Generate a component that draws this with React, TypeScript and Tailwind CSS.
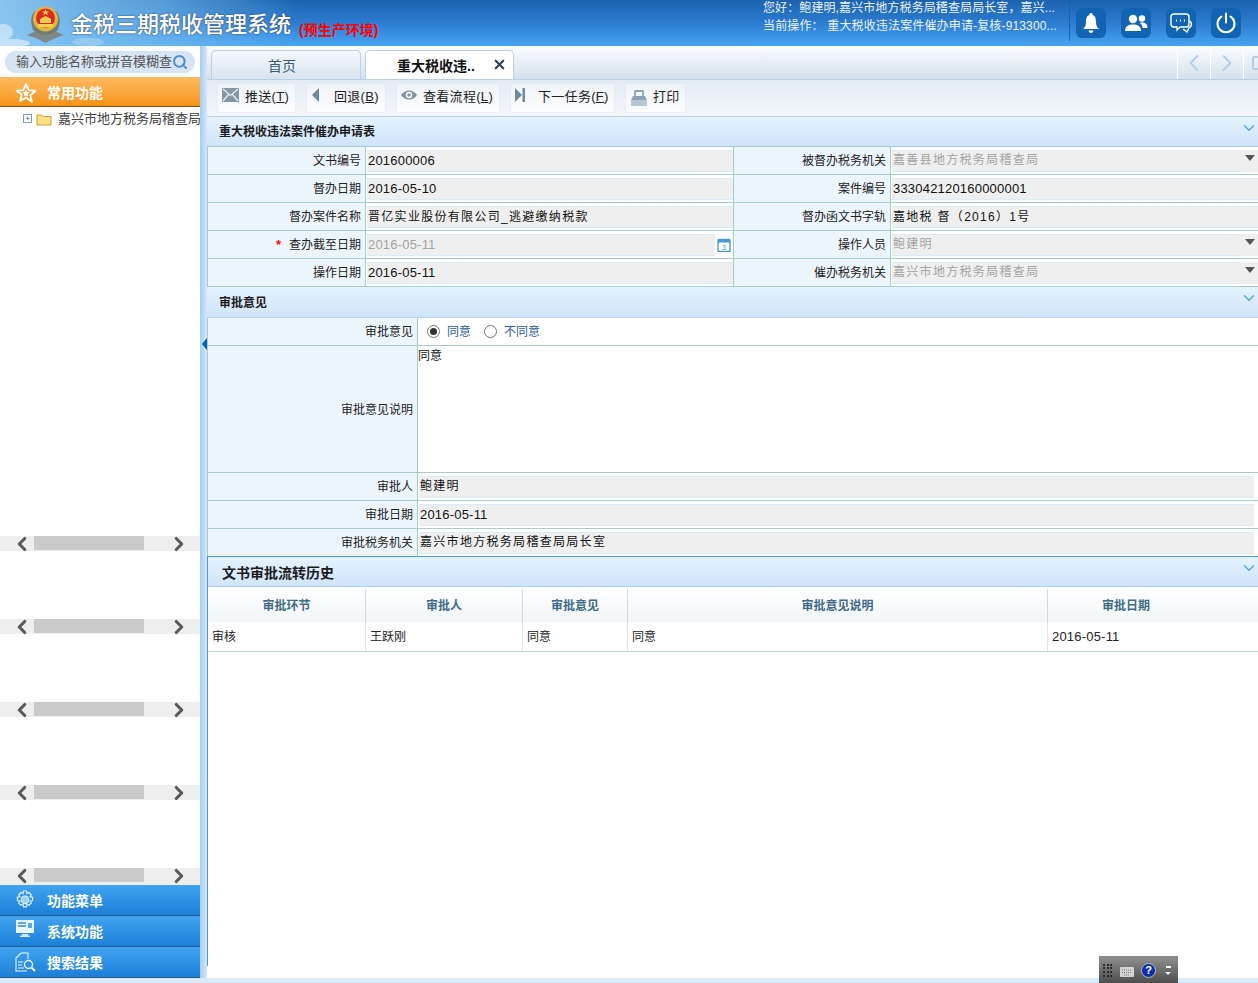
import React from 'react';
import { ChevronDown, ChevronLeft, ChevronRight, Search, X } from 'lucide-react';

const font = 'font-["Liberation_Sans","Noto_Sans_CJK_SC",sans-serif]';

// 表单的一行
interface Field {
  label: string;
  value: string;
  kind?: 'input' | 'select' | 'date';
  required?: boolean;
  disabled?: boolean;
  wide?: boolean;
}

const formRows: [Field, Field][] = [
  [
    { label: '文书编号', value: '201600006' },
    { label: '被督办税务机关', value: '嘉善县地方税务局稽查局', kind: 'select', disabled: true, wide: true },
  ],
  [
    { label: '督办日期', value: '2016-05-10' },
    { label: '案件编号', value: '333042120160000001' },
  ],
  [
    { label: '督办案件名称', value: '晋亿实业股份有限公司_逃避缴纳税款', wide: true },
    { label: '督办函文书字轨', value: '嘉地税 督（2016）1号', wide: true },
  ],
  [
    { label: '查办截至日期', value: '2016-05-11', kind: 'date', required: true, disabled: true },
    { label: '操作人员', value: '鲍建明', kind: 'select', disabled: true, wide: true },
  ],
  [
    { label: '操作日期', value: '2016-05-11' },
    { label: '催办税务机关', value: '嘉兴市地方税务局稽查局', kind: 'select', disabled: true, wide: true },
  ],
];

const FieldValue: React.FC<{ field: Field }> = ({ field }) => {
  const tone = field.disabled ? 'text-[#a3a3a3]' : 'text-[#111]';
  const spacing = field.wide ? 'text-xs tracking-[1.3px]' : 'text-[13px] tracking-[0.2px]';
  const lift = field.kind === 'select' ? 'pb-[2px]' : '';
  return (
    <div className="flex h-full items-center pl-px">
      <div className={`flex h-[22px] min-w-0 flex-1 items-center border-y border-[#dcebf5] bg-[#efefef] pl-[1px] ${tone} ${spacing} ${lift}`}>
        {field.value}
      </div>
      {field.kind === 'date' && (
        <svg className="mx-[2px] h-[14px] w-[14px] shrink-0" viewBox="0 0 14 14">
          <rect x="1" y="1.5" width="12" height="12" rx="1" fill="#fff" stroke="#4a9ad8" strokeWidth="1.4" />
          <rect x="1" y="1.5" width="12" height="3" fill="#4a9ad8" />
          <text x="7" y="12" fontSize="7" textAnchor="middle" fill="#4a9ad8">3</text>
        </svg>
      )}
      {field.kind === 'select' && (
        <div className="flex h-[22px] w-[17px] shrink-0 items-center justify-center bg-[#efefef]">
          <div className="h-0 w-0 -translate-y-[3px] border-x-[5px] border-t-[6px] border-x-transparent border-t-[#555]" />
        </div>
      )}
    </div>
  );
};

const Label: React.FC<{ children: React.ReactNode; required?: boolean; className?: string }> = ({ children, required, className = '' }) => (
  <div className={`flex h-full items-center justify-end bg-[#edf5fc] pr-[4px] text-xs text-[#222] ${className}`}>
    {required && <span className="mr-[8px] text-[13px] font-bold text-[#f00]">*</span>}
    {children}
  </div>
);

const SectionHeader: React.FC<{ title: string; className?: string }> = ({ title, className = '' }) => (
  <div className={`relative flex items-center bg-gradient-to-b from-[#e6f2fe] to-[#cfe4fb] ${className}`}>
    <span className="font-bold text-[#1c1c1c]">{title}</span>
    <ChevronDown className="absolute right-0 top-[2px] h-[18px] w-[18px] text-[#4f9fe0]" strokeWidth={1.7} />
  </div>
);

const HScroll: React.FC<{ className?: string }> = ({ className = 'h-[15px]' }) => (
  <div className={`flex shrink-0 items-start bg-[#eeeeee] ${className}`}>
    <div className="flex h-[15px] w-[34px] items-center justify-end pr-[1.5px]">
      <ChevronLeft className="h-[22px] w-[22px] shrink-0 text-[#5a5a5a]" strokeWidth={3.4} />
    </div>
    <div className="h-[14px] w-[110px] bg-[#cacaca]" />
    <div className="ml-[23.5px] flex h-[15px] items-center">
      <ChevronRight className="h-[22px] w-[22px] shrink-0 text-[#5a5a5a]" strokeWidth={3.4} />
    </div>
  </div>
);

const SideMenu: React.FC<{ title: string; icon: React.ReactNode }> = ({ title, icon }) => (
  <div className="flex h-[31px] items-center border-b border-[#24588f] bg-gradient-to-b from-[#41a3f0] to-[#1c80d8] pl-[15px] text-sm font-bold text-white">
    <span className="flex w-[32px]">{icon}</span>
    <span className="pt-px">{title}</span>
  </div>
);

const ToolButton: React.FC<{ icon: React.ReactNode; label: string; hotkey?: string; gap: string; width: string }> = ({ icon, label, hotkey, gap, width }) => (
  <div className={`flex h-[28px] items-center rounded-[2px] bg-gradient-to-b from-[#f0f4f9] to-[#fbfcfe] pb-[2px] pl-[4px] text-[13px] text-[#222] shadow-[0_0_2px_#dfe5ec] ${width}`}>
    <span className={`mb-[4px] flex shrink-0 ${gap}`}>{icon}</span>
    <span className="tracking-[0.3px]">
      {label}
      {hotkey && (
        <>
          (<span className="underline">{hotkey}</span>)
        </>
      )}
    </span>
  </div>
);

const HeaderIcon: React.FC<{ children: React.ReactNode }> = ({ children }) => (
  <div className="flex h-[30px] w-[30px] items-center justify-center rounded-[6px] bg-[#1264b2]">{children}</div>
);

const historyCols = 'grid-cols-[158px_157px_105px_420px_1fr]';

export default function App() {
  return (
    <div className={`flex h-[983px] w-[1258px] flex-col overflow-hidden bg-white ${font}`}>
      {/* 顶部 */}
      <header className="relative flex h-[46px] shrink-0 items-start overflow-hidden bg-gradient-to-b from-[#1c62ae] via-[#2c7cd0] to-[#47a5f4]">
        <svg className="absolute left-0 top-0 h-[46px] w-[300px]" viewBox="0 0 300 46" aria-hidden="true">
          <defs>
            <linearGradient id="sky" x1="0" x2="1" y1="0" y2="0">
              <stop offset="0" stopColor="#8fc9f2" stopOpacity="0.95" />
              <stop offset="0.55" stopColor="#7cc0f0" stopOpacity="0.6" />
              <stop offset="1" stopColor="#7cc0f0" stopOpacity="0" />
            </linearGradient>
          </defs>
          <rect width="300" height="46" fill="url(#sky)" />
          <ellipse cx="3" cy="32" rx="10" ry="8" fill="#fff" opacity="0.45" />
          <ellipse cx="12" cy="43" rx="18" ry="4" fill="#fff" opacity="0.5" />
          <ellipse cx="88" cy="42" rx="16" ry="4" fill="#fff" opacity="0.22" />
        </svg>
        <svg className="relative ml-[27px] mt-[3px] h-[40px] w-[37px] shrink-0" viewBox="0 0 37 40">
          <path d="M0 32 L9 28 Q18.500 35 28 28 L37 32 L26 36 L18.500 40 L11 36 Z" fill="#7f898c" />
          <path d="M6 27 Q2 15 7 9 L11 7 Q18.500 3 26 7 L30 9 Q35 15 31 27 Q18.500 37 6 27 Z" fill="#6f7d72" />
          <circle cx="18.500" cy="16" r="12.500" fill="#e0b63f" />
          <circle cx="18.500" cy="15" r="9.500" fill="#d92a24" />
          <path d="M11 21 h15 v3 h-15 Z" fill="#f2d04f" />
          <path d="M13 20 v-4 l5.500-3 5.500 3 v4 Z" fill="#f2d04f" />
          <path d="M18.500 6 l1 2.400 h2.500 l-2 1.500 .8 2.400 -2.300-1.500 -2.300 1.500 .8-2.400 -2-1.500 h2.500 Z" fill="#f7d84f" />
        </svg>
        <div className="relative ml-[7px] mt-[10px] text-[22px] font-medium leading-[30px] text-white [text-shadow:0_0_2px_#335]">金税三期税收管理系统</div>
        <div className="relative ml-[8px] mt-[20px] text-sm font-bold leading-[20px] text-[#f00]">(预生产环境)</div>
        <div className="relative ml-auto -mt-px w-[306px] text-xs leading-[18px] text-[#eaf3fc]">
          <div className="tracking-[0.1px]">您好：鲍建明,嘉兴市地方税务局稽查局局长室，嘉兴...</div>
          <div className="tracking-[0.15px]">当前操作： 重大税收违法案件催办申请-复核-913300...</div>
        </div>
        <div className="relative flex h-[41px] gap-[15px] border-l border-[#1264b2] pl-[6px] pt-[8px] pr-[17px]">
          <HeaderIcon>
            <svg className="h-[22px] w-[18px]" viewBox="0 0 18 22" fill="#fff">
              <path d="M9 1 a1.600 1.600 0 0 1 1.600 2 C13.500 4 14 7 14 10 c0 3.500 1 5.500 3 7 H1 c2-1.500 3-3.500 3-7 C4 7 4.500 4 7.400 3 A1.600 1.600 0 0 1 9 1 Z" />
              <path d="M6.500 18.500 h5 a2.500 2.500 0 0 1-5 0 Z" />
            </svg>
          </HeaderIcon>
          <HeaderIcon>
            <svg className="h-[18px] w-[24px]" viewBox="0 0 24 18" fill="#fff">
              <circle cx="9" cy="5" r="4.200" />
              <path d="M1 17 c0-5 3.500-6.500 8-6.500 s8 1.500 8 6.500 Z" />
              <circle cx="18" cy="4.500" r="3.200" />
              <path d="M17 8.500 c3.500-.5 6.500 1 6.500 5.500 H18.500 c0-2.500-1-4-3-5 Z" />
            </svg>
          </HeaderIcon>
          <HeaderIcon>
            <svg className="h-[24px] w-[24px]" viewBox="0 0 24 24" fill="none" stroke="#fff" strokeWidth="1.400">
              <path d="M5 3 h12 a3 3 0 0 1 3 3 v7 a3 3 0 0 1-3 3 h-6 l-3 3 v-3 H5 a3 3 0 0 1-3-3 V6 a3 3 0 0 1 3-3 Z" />
              <path d="M21 10 c2 2 2 6-1 7 l-2 4 -4-3" />
              <path d="M7 9.500 h1 M11 9.500 h1 M15 9.500 h1" strokeWidth="1.800" />
            </svg>
          </HeaderIcon>
          <HeaderIcon>
            <svg className="h-[22px] w-[22px]" viewBox="0 0 22 22" fill="none" stroke="#fff" strokeWidth="2" strokeLinecap="round">
              <path d="M6.500 4.500 a8.500 8.500 0 1 0 9 0" />
              <path d="M11 1.500 v9" />
            </svg>
          </HeaderIcon>
        </div>
      </header>

      <div className="flex min-h-0 flex-1">
        {/* 左侧导航 */}
        <aside className="flex w-[200px] shrink-0 flex-col">
          <div className="flex h-[31px] shrink-0 items-center px-[5px]">
            <div className="flex h-[22px] w-full items-center rounded-full bg-[#d7e4f3] pl-[11px] pr-[7px]">
              <span className="min-w-0 flex-1 whitespace-nowrap text-[13px] text-[#555]">输入功能名称或拼音模糊查</span>
              <Search className="h-[16px] w-[16px] shrink-0 text-[#4a90d0]" strokeWidth={3} />
            </div>
          </div>
          <div className="flex h-[30px] shrink-0 items-center border-b border-[#7a5a20] bg-gradient-to-b from-[#fdbb5e] to-[#f5930f] pl-[15px] pt-[2px] text-sm font-bold text-white">
            <svg className="mr-[10px] h-[22px] w-[22px]" viewBox="0 0 24 24" fill="none" stroke="#fff" strokeWidth="2" strokeLinejoin="round">
              <path d="M12 2 l3 6.800 7.300.7-5.500 4.900 1.600 7.200L12 17l-6.400 3.600 1.600-7.200L1.700 9.500 9 8.800Z" />
              <path d="M12 8.500 l1.200 2.500 2.700.3-2 1.800.6 2.700-2.500-1.400-2.500 1.400.6-2.700-2-1.800 2.700-.3Z" fill="#fff" stroke="none" />
            </svg>
            常用功能
          </div>
          <div className="flex h-[429px] shrink-0 items-start overflow-hidden pl-[23px] pt-[3px]">
            <div className="mt-[4px] flex h-[9px] w-[9px] shrink-0 items-center justify-center border border-[#8a9ab0] text-[8px] leading-none text-[#345]">+</div>
            <svg className="ml-[4px] mt-[2px] h-[14px] w-[16px] shrink-0" viewBox="0 0 16 14">
              <path d="M1 3 h5 l1.500 1.500 H15 V13 H1 Z" fill="#fde082" stroke="#c9a23c" />
            </svg>
            <span className="ml-[6px] whitespace-nowrap text-[13px] leading-[18px] text-[#444]">嘉兴市地方税务局稽查局</span>
          </div>
          <HScroll />
          <div className="h-[68px] shrink-0" />
          <HScroll />
          <div className="h-[68px] shrink-0" />
          <HScroll />
          <div className="h-[68px] shrink-0" />
          <HScroll />
          <div className="h-[68px] shrink-0" />
          <HScroll className="h-[17px]" />
          <div className="flex flex-col">
            <SideMenu
              title="功能菜单"
              icon={
                <svg className="h-[20px] w-[20px]" viewBox="0 0 20 20" fill="none" stroke="#dff0ff" strokeWidth="1.200">
                  <path d="M8.500 1 h3 l.5 2.500 2-1 2.300 2.200-1.200 2 2.500.6 v3.200 l-2.500.6 1.200 2-2.300 2.200-2-1-.5 2.500 h-3 l-.5-2.500-2 1-2.300-2.200 1.200-2-2.500-.6 V7.300 l2.500-.6-1.200-2 2.300-2.200 2 1Z" />
                  <circle cx="10" cy="9.800" r="3.800" fill="#9fd0f5" />
                </svg>
              }
            />
            <SideMenu
              title="系统功能"
              icon={
                <svg className="mb-[5px] h-[19px] w-[20px]" viewBox="0 0 20 19">
                  <rect x="1" y="1" width="18" height="13" fill="#e9f5ff" />
                  <rect x="3" y="3" width="8" height="2" fill="#5fa8e4" />
                  <rect x="3" y="6" width="8" height="2" fill="#5fa8e4" />
                  <rect x="13" y="4" width="4" height="5" fill="#5fa8e4" />
                  <path d="M7 15 h6 v1.500 h2 V18 H5 v-1.500 h2 Z" fill="#cfe7fb" />
                </svg>
              }
            />
            <SideMenu
              title="搜索结果"
              icon={
                <svg className="h-[20px] w-[21px]" viewBox="0 0 21 20" fill="none" stroke="#e9f5ff" strokeWidth="1.100">
                  <path d="M6 1 h7 v6 M6 1 L1 6 v13 h11" />
                  <path d="M3 10 h5 M3 13 h4 M3 16 h6" />
                  <circle cx="13.500" cy="12.500" r="4" strokeWidth="1.400" />
                  <path d="M16.500 15.500 L20 19" strokeWidth="2" />
                </svg>
              }
            />
          </div>
        </aside>

        {/* 折叠条 */}
        <div className="relative w-[7px] shrink-0 bg-gradient-to-r from-[#a6cdf0] to-[#d5e6f7]">
          <div className="absolute left-[2px] top-[292px] h-0 w-0 border-y-[6px] border-r-[5px] border-y-transparent border-r-[#0f5ca8]" />
        </div>

        {/* 主区域 */}
        <main className="relative flex min-w-0 flex-1 flex-col">
          {/* 页签 */}
          <div className="flex h-[34px] shrink-0 items-end border-b border-[#b9cfe6] bg-gradient-to-b from-[#fafdff] to-[#d4e0ec] pl-[4px]">
            <div className="flex h-[29px] w-[150px] items-center justify-center rounded-t-[5px] border border-b-0 border-[#bcd0e4] bg-gradient-to-b from-[#f4f8fc] to-[#d8e4f0] pr-[8px] pt-[2px] text-sm text-[#3c5a78]">首页</div>
            <div className="relative ml-[4px] flex h-[29px] w-[149px] items-center rounded-t-[5px] border border-b-0 border-[#bcd0e4] bg-white pl-[31px] pt-[2px] text-sm font-bold text-[#111]">
              重大税收违..
              <X className="absolute right-[6px] top-[6px] h-[15px] w-[15px] text-[#34405a]" strokeWidth={3.5} />
            </div>
            <div className="ml-auto flex h-full">
              <div className="flex w-[33px] items-center justify-center border-l border-white">
                <ChevronLeft className="h-[28px] w-[28px] text-[#b3cde8]" strokeWidth={1.6} />
              </div>
              <div className="flex w-[33px] items-center justify-center border-l border-white">
                <ChevronRight className="h-[28px] w-[28px] text-[#b3cde8]" strokeWidth={1.6} />
              </div>
              <div className="flex w-[15px] items-center overflow-hidden border-l border-white pl-[8px]">
                <div className="h-[14px] w-[14px] shrink-0 rounded-[2px] border-2 border-[#b3cde8]" />
              </div>
            </div>
          </div>

          {/* 工具栏 */}
          <div className="flex h-[37px] shrink-0 items-start gap-[12px] border-b border-[#b5d3ec] bg-gradient-to-b from-[#e3ebf4] to-[#f3f7fb] pl-[11px] pt-[4px]">
            <ToolButton
              width="w-[77px]"
              gap="mr-[6px]"
              label="推送"
              hotkey="T"
              icon={
                <svg className="h-[14px] w-[17px]" viewBox="0 0 17 14">
                  <rect width="17" height="14" fill="#8397a8" />
                  <path d="M1 1 L8.500 7.500 16 1 M1 13 L6.500 6.500 M16 13 L10.500 6.500" stroke="#e6edf3" strokeWidth="1.300" fill="none" />
                </svg>
              }
            />
            <ToolButton
              width="w-[78px]"
              gap="mr-[13px]"
              label="回退"
              hotkey="B"
              icon={
                <svg className="h-[14px] w-[10px]" viewBox="0 0 10 14">
                  <path d="M8 0 V14 L1 7 Z" fill="#6f8aa0" />
                </svg>
              }
            />
            <ToolButton
              width="w-[102px]"
              gap="mr-[6px]"
              label="查看流程"
              hotkey="L"
              icon={
                <svg className="h-[12px] w-[16px]" viewBox="0 0 16 12">
                  <path d="M0 6 C4 0 12 0 16 6 C12 12 4 12 0 6 Z" fill="#7e96a8" />
                  <circle cx="8" cy="6" r="3.200" fill="#fff" />
                  <circle cx="8" cy="6" r="1.800" fill="#7e96a8" />
                </svg>
              }
            />
            <ToolButton
              width="w-[103px]"
              gap="mr-[12px]"
              label="下一任务"
              hotkey="F"
              icon={
                <svg className="h-[14px] w-[11px]" viewBox="0 0 11 14">
                  <path d="M0 0 L7 7 0 14 Z" fill="#6f8aa0" />
                  <rect x="7.500" width="2.500" height="14" fill="#6f8aa0" />
                </svg>
              }
            />
            <ToolButton
              width="w-[59px]"
              gap="mr-[5px]"
              label="打印"
              icon={
                <svg className="mt-[6px] h-[18px] w-[18px]" viewBox="0 0 18 18">
                  <path d="M5 7 V2 h8 V7" fill="none" stroke="#6f8aa0" strokeWidth="1.300" />
                  <path d="M3 7 H15 L17 11 H1 Z" fill="#8aa2b5" />
                  <rect x="1" y="11" width="16" height="6" fill="#b5c7d4" />
                </svg>
              }
            />
          </div>

          {/* 申请表 */}
          <SectionHeader title="重大税收违法案件催办申请表" className="h-[29px] shrink-0 pl-[12px] text-xs" />
          <div className="shrink-0 border-y border-l border-[#a5cdc9]">
            {formRows.map(([a, b]) => (
              <div key={a.label} className="grid h-[28px] grid-cols-[158px_368px_157px_1fr] border-b border-[#a5cdc9] last:h-[27px] last:border-b-0">
                <div className="border-r border-[#a5cdc9]">
                  <Label required={a.required}>{a.label}</Label>
                </div>
                <div className="border-r border-[#a5cdc9]">
                  <FieldValue field={a} />
                </div>
                <div className="border-r border-[#a5cdc9]">
                  <Label>{b.label}</Label>
                </div>
                <FieldValue field={b} />
              </div>
            ))}
          </div>

          {/* 审批意见 */}
          <SectionHeader title="审批意见" className="h-[31px] shrink-0 border-b border-[#b5d3ec] pt-px pl-[12px] text-xs" />
          <div className="shrink-0 border-l border-[#a5cdc9]">
            <div className="grid h-[28px] grid-cols-[210px_1fr] border-b border-[#a5cdc9]">
              <div className="border-r border-[#a5cdc9]"><Label>审批意见</Label></div>
              <div className="flex items-center pl-[9px] text-xs text-[#2c5d9c]">
                <span className="flex h-[13px] w-[13px] items-center justify-center rounded-full border border-[#777]">
                  <span className="h-[7px] w-[7px] rounded-full bg-[#333]" />
                </span>
                <span className="ml-[7px]">同意</span>
                <span className="ml-[13px] h-[13px] w-[13px] rounded-full border border-[#777]" />
                <span className="ml-[7px]">不同意</span>
              </div>
            </div>
            <div className="grid h-[127px] grid-cols-[210px_1fr] border-b border-[#a5cdc9]">
              <div className="border-r border-[#a5cdc9]"><Label className="pt-[2px]">审批意见说明</Label></div>
              <div className="pt-px text-xs leading-[18px] text-[#111]">同意</div>
            </div>
            {[
              ['审批人', '鲍建明', 'pb-[2px] text-xs tracking-[1.3px]'],
              ['审批日期', '2016-05-11', 'text-[13px] tracking-[0.2px]'],
              ['审批税务机关', '嘉兴市地方税务局稽查局局长室', 'pb-[2px] text-xs tracking-[1.3px]'],
            ].map(([label, value, extra]) => (
              <div key={label} className="grid h-[28px] grid-cols-[210px_1fr] border-b border-[#a5cdc9] last:h-[27px] last:border-b-0">
                <div className="border-r border-[#a5cdc9]"><Label>{label}</Label></div>
                <div className="flex h-full items-center pl-px pr-[4px]">
                  <div className={`flex h-[22px] w-full items-center border-y border-[#dcebf5] bg-[#efefef] pl-[1px] text-[#111] ${extra}`}>{value}</div>
                </div>
              </div>
            ))}
          </div>

          {/* 流转历史 */}
          <div className="flex h-[410px] shrink-0 flex-col border-l border-t border-[#4a9ad8]">
            <SectionHeader title="文书审批流转历史" className="h-[30px] shrink-0 border-b border-[#a9cff0] pl-[14px] pt-[2px] text-sm" />
            <div className={`grid h-[35px] shrink-0 ${historyCols} bg-gradient-to-b from-white to-[#f1f5f9] pt-[2px] text-xs font-bold text-[#3f6a88]`}>
              {['审批环节', '审批人', '审批意见', '审批意见说明', '审批日期'].map((h, i) => (
                <div key={h} className={`flex items-center justify-center ${i < 4 ? 'border-r border-[#cbdcdc]' : 'pr-[54px]'}`}>{h}</div>
              ))}
            </div>
            <div className={`grid h-[30px] shrink-0 ${historyCols} border-b border-[#c3dad8] text-xs text-[#222]`}>
              {['审核', '王跃刚', '同意', '同意', '2016-05-11'].map((c, i) => (
                <div key={i} className={`flex items-center pl-[4px] ${i < 4 ? 'border-r border-[#dde8e8]' : 'text-[13px] tracking-[0.2px]'}`}>{c}</div>
              ))}
            </div>
          </div>

          {/* 输入法浮条 */}
          <div className="absolute left-[892px] top-[910px] flex h-[27px] w-[79px] items-center border-t-2 border-[#8a8a8a] bg-gradient-to-b from-[#8d8d8d] to-[#4e4e4e] pl-[4px]">
            <div className="grid h-[14px] w-[10px] grid-cols-3 gap-px">
              {Array.from({ length: 12 }).map((_, i) => (
                <span key={i} className="h-[2px] w-[2px] bg-[#2b2b2b]" />
              ))}
            </div>
            <svg className="ml-[7px] h-[12px] w-[14px]" viewBox="0 0 14 12">
              <rect y="2" width="14" height="10" rx="1" fill="#d4d4d4" />
              <path d="M2 5 h10 M2 7.500 h10 M4 10 h6" stroke="#777" strokeDasharray="1 1" />
            </svg>
            <div className="ml-[7px] flex h-[15px] w-[15px] items-center justify-center rounded-full border border-[#bbb] bg-[#0b2fa5] text-[11px] font-bold leading-none text-white">?</div>
            <div className="ml-[9px] flex flex-col items-center gap-[4px]">
              <span className="h-[2px] w-[5px] bg-white" />
              <span className="h-0 w-0 border-x-[3px] border-t-[3px] border-x-transparent border-t-white" />
            </div>
          </div>
        </main>
      </div>
      <div className="h-[5px] shrink-0 bg-[#d9e9f8]" />
    </div>
  );
}
